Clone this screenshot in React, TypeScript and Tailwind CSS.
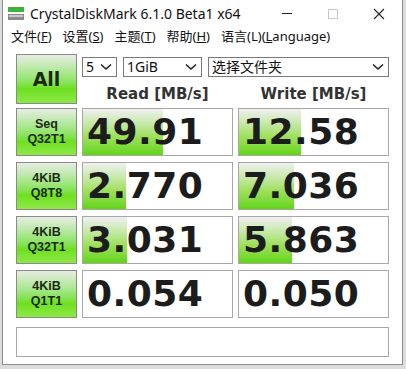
import React from 'react';

const ui = { fontFamily: '"Noto Sans", "Noto Sans CJK SC", sans-serif' };
const num = { fontFamily: '"DejaVu Sans", Verdana, sans-serif' };
const small = { fontFamily: '"Liberation Sans", Arial, sans-serif' };

type Row = { a: string; b: string; read: string; write: string; rw: number; ww: number };

const rows: Row[] = [
  { a: 'Seq', b: 'Q32T1', read: '49.91', write: '12.58', rw: 80, ww: 62 },
  { a: '4KiB', b: 'Q8T8', read: '2.770', write: '7.036', rw: 43, ww: 55 },
  { a: '4KiB', b: 'Q32T1', read: '3.031', write: '5.863', rw: 44, ww: 53 },
  { a: '4KiB', b: 'Q1T1', read: '0.054', write: '0.050', rw: 0, ww: 0 },
];

const btn =
  'border border-[#8a8a8a] bg-gradient-to-b from-[#e6ece2] via-[#6ee01c] via-70% to-[#8ee846] flex flex-col items-center justify-center text-[#1b2a12] font-bold';

const Chevron = () => (
  <svg width="12" height="8" viewBox="0 0 12 8" className="shrink-0">
    <path d="M1 1.5 L6 6 L11 1.5" fill="none" stroke="#222" strokeWidth="1.6" />
  </svg>
);

const Combo = ({ label, className }: { label: string; className: string }) => (
  <div
    className={`h-[20px] border border-[#7a7a7a] bg-white flex items-center justify-between pl-[3px] pr-[4px] text-[14px] text-[#111] ${className}`}
    style={ui}
  >
    <span className="leading-none">{label}</span>
    <Chevron />
  </div>
);

const Cell = ({ value, bar }: { value: string; bar: number }) => (
  <div className="relative h-[48px] border border-[#a8a8a8] bg-white overflow-hidden">
    {bar > 0 && (
      <div
        className="absolute left-0 top-0 bottom-0 bg-gradient-to-b from-[#f0f0f0] via-[#9fe05a] via-60% to-[#5fd60e]"
        style={{ width: bar }}
      />
    )}
    <div
      className="relative pl-[4px] text-[36px] font-bold leading-[46px] text-[#1c1c1c] tracking-[0.5px]"
      style={num}
    >
      {value}
    </div>
  </div>
);

export default function App() {
  return (
    <div className="w-[406px] h-[369px] bg-[#dcdcdc] overflow-hidden relative">
      <div className="ml-[2px] w-[401px] h-[365px] bg-white border-l border-r border-b border-[#8c8c8c] flex flex-col">
        {/* title bar */}
        <div className="h-[27px] flex items-center shrink-0">
          <svg width="16" height="14" viewBox="0 0 16 14" className="ml-[5px] mr-[6px]">
            <rect x="0" y="0" width="16" height="5" fill="#3cb43c" />
            <rect x="0" y="7" width="16" height="6" fill="#8a8a8a" />
            <rect x="1" y="8" width="14" height="2" fill="#c8c8c8" />
          </svg>
          <span className="text-[14px] text-[#111]" style={ui}>
            CrystalDiskMark 6.1.0 Beta1 x64
          </span>
          <div className="ml-auto flex items-center">
            <div className="w-[46px] flex justify-center">
              <div className="w-[10px] h-px bg-[#222]" />
            </div>
            <div className="w-[46px] flex justify-center">
              <div className="w-[10px] h-[10px] border border-[#c8c8c8]" />
            </div>
            <div className="w-[46px] flex justify-center">
              <svg width="12" height="12" viewBox="0 0 12 12">
                <path d="M1 1 L11 11 M11 1 L1 11" stroke="#222" strokeWidth="1.1" />
              </svg>
            </div>
          </div>
        </div>

        {/* menu bar */}
        <div className="h-[19px] flex items-center gap-[11px] pl-[8px] text-[13px] text-[#111] shrink-0" style={ui}>
          <span>文件(<u>F</u>)</span>
          <span>设置(<u>S</u>)</span>
          <span>主题(<u>T</u>)</span>
          <span>帮助(<u>H</u>)</span>
          <span>语言(L)(<u>L</u>anguage)</span>
        </div>

        {/* main */}
        <div className="flex-1 pl-[13px] pt-[8px]">
          <div className="grid grid-cols-[61px_151px_151px] gap-x-[5px] h-[50px]">
            <div className={`${btn} h-[50px] text-[19px]`} style={num}>
              All
            </div>
            <div className="col-span-2 flex flex-col h-[50px]">
              <div className="flex gap-[6px] mt-[3px]">
                <Combo label="5" className="w-[35px]" />
                <Combo label="1GiB" className="w-[79px]" />
                <Combo label="选择文件夹" className="w-[181px]" />
              </div>
              <div
                className="grid grid-cols-2 gap-x-[5px] mt-[8px] text-[15px] leading-[18px] font-bold text-[#333]"
                style={num}
              >
                <div className="text-center">Read [MB/s]</div>
                <div className="text-center">Write [MB/s]</div>
              </div>
            </div>
          </div>

          <div className="grid grid-cols-[61px_151px_151px] gap-x-[5px] gap-y-[6px] mt-[4px]">
            {rows.map((r, i) => (
              <React.Fragment key={i}>
                <div className={`${btn} h-[48px] text-[12.5px] leading-[15px]`} style={small}>
                  <span>{r.a}</span>
                  <span>{r.b}</span>
                </div>
                <Cell value={r.read} bar={r.rw} />
                <Cell value={r.write} bar={r.ww} />
              </React.Fragment>
            ))}
          </div>

          <div className="mt-[9px] w-[373px] h-[30px] border border-[#a8a8a8] bg-white" />
        </div>
      </div>
    </div>
  );
}
